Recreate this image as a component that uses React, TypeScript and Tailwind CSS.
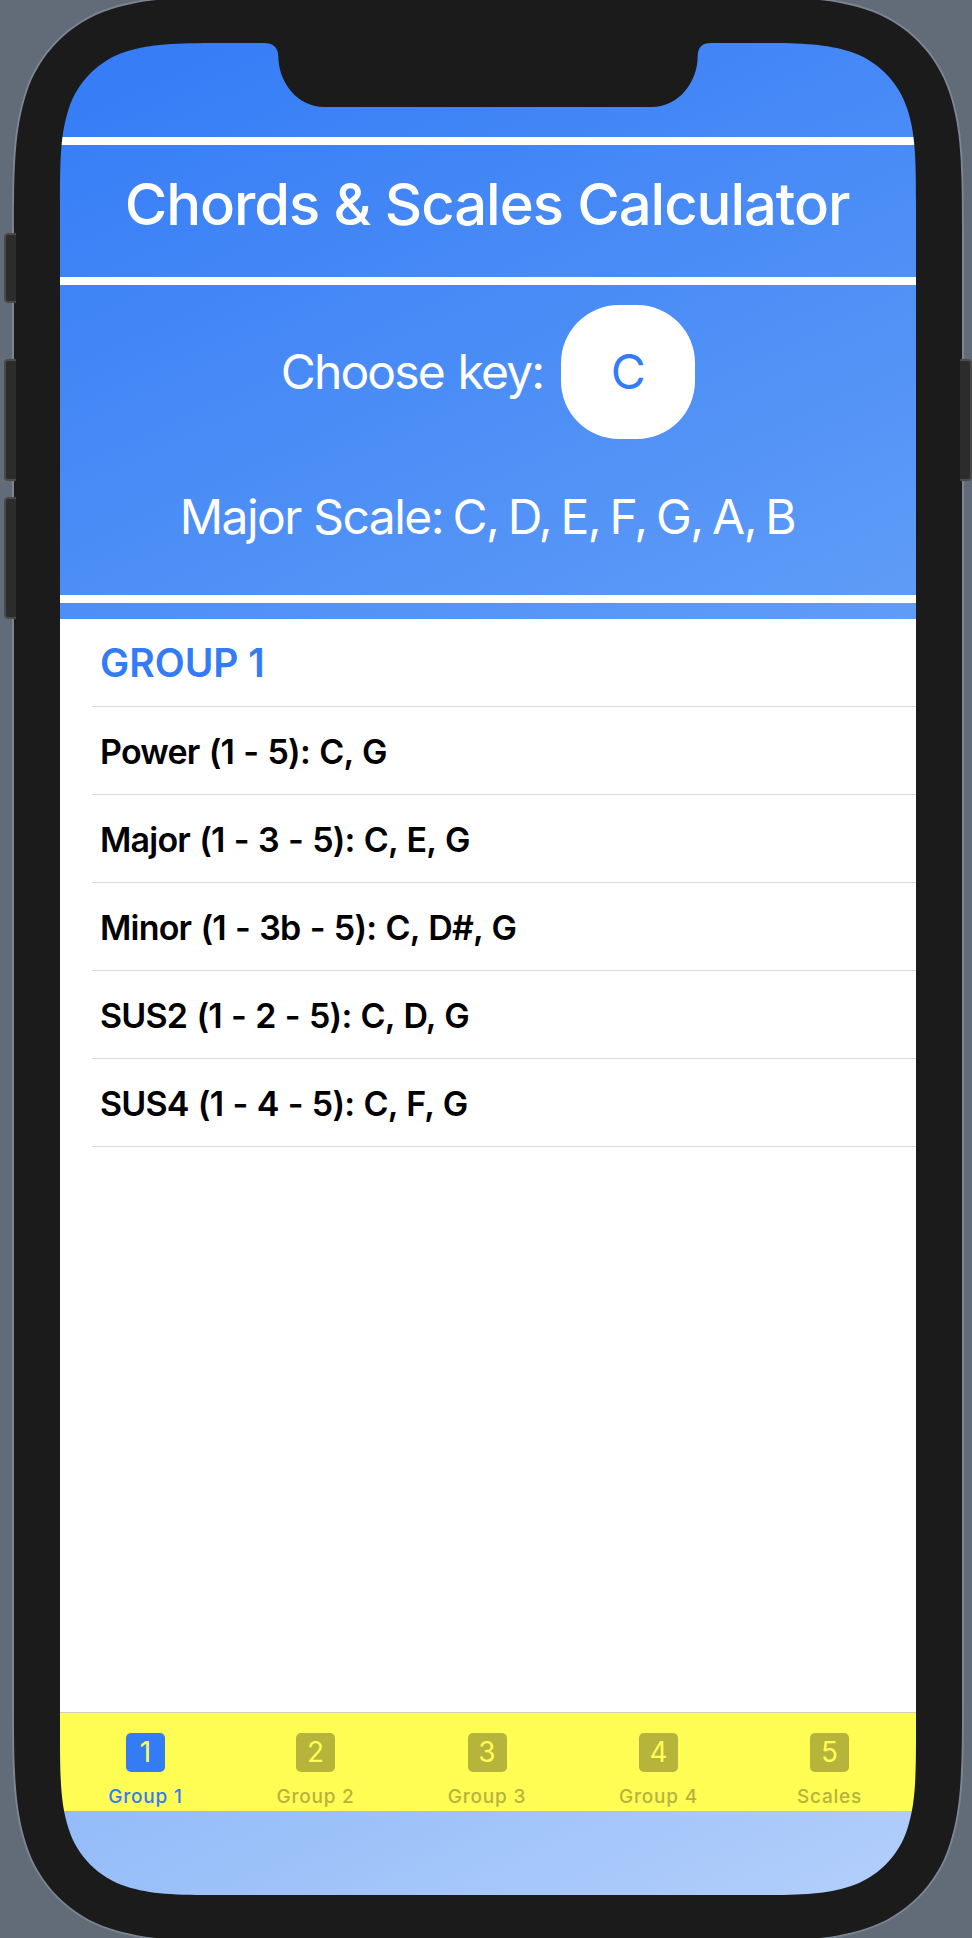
const tabs = [
  { digit: "1", label: "Group 1", width: "w-[170px] pl-px" },
  { digit: "2", label: "Group 2", width: "w-[171px]" },
  { digit: "3", label: "Group 3", width: "w-[172px]" },
  { digit: "4", label: "Group 4", width: "w-[171px]" },
  { digit: "5", label: "Scales", width: "w-[171px]" },
];

const chords = [
  "Power (1 - 5): C, G",
  "Major (1 - 3 - 5): C, E, G",
  "Minor (1 - 3b - 5): C, D#, G",
  "SUS2 (1 - 2 - 5): C, D, G",
  "SUS4 (1 - 4 - 5): C, F, G",
];

// Closed outline of a rectangle with continuous-curvature corners.
function smoothRect(l: number, t: number, r: number, b: number, rad: number) {
  const e = 1.5287 * rad;
  const p = 1.0885 * rad;
  const q = 0.86 * rad;
  const k = 0.008 * rad;
  const m = 0.6315 * rad;
  const n = 0.082 * rad;
  const u = 0.3728 * rad;
  const v = 0.162 * rad;
  return [
    `M${l + e} ${t}L${r - e} ${t}`,
    `C${r - p} ${t} ${r - q} ${t + k} ${r - m} ${t + n}`,
    `C${r - u} ${t + v} ${r - v} ${t + u} ${r - n} ${t + m}`,
    `C${r - k} ${t + q} ${r} ${t + p} ${r} ${t + e}`,
    `L${r} ${b - e}`,
    `C${r} ${b - p} ${r - k} ${b - q} ${r - n} ${b - m}`,
    `C${r - v} ${b - u} ${r - u} ${b - v} ${r - m} ${b - n}`,
    `C${r - q} ${b - k} ${r - p} ${b} ${r - e} ${b}`,
    `L${l + e} ${b}`,
    `C${l + p} ${b} ${l + q} ${b - k} ${l + m} ${b - n}`,
    `C${l + u} ${b - v} ${l + v} ${b - u} ${l + n} ${b - m}`,
    `C${l + k} ${b - q} ${l} ${b - p} ${l} ${b - e}`,
    `L${l} ${t + e}`,
    `C${l} ${t + p} ${l + k} ${t + q} ${l + n} ${t + m}`,
    `C${l + v} ${t + u} ${l + u} ${t + v} ${l + m} ${t + n}`,
    `C${l + q} ${t + k} ${l + p} ${t} ${l + e} ${t}Z`,
  ].join("");
}

function PhoneFrame() {
  const screen = smoothRect(60, 43, 916, 1895, 105);
  const body = smoothRect(14, -3, 962, 1941, 153);
  const rim = smoothRect(12, -5, 964, 1943, 155);
  const outside = "M0 0H972V1938H0Z";
  return (
    <svg className="pointer-events-none absolute inset-0" width="972" height="1938" viewBox="0 0 972 1938" aria-hidden="true">
      <path d={outside + rim} fill="#626c78" fillRule="evenodd" />
      <path d={rim + body} fill="#7d8492" fillRule="evenodd" />
      <path d={body + screen} fill="#1b1b1b" fillRule="evenodd" />
      <path
        d="M264 42V43C273 43 278 47 278.3 56C278.3 82 297 107 325 107H651C679 107 697.7 82 697.7 56C698 47 702 43 711 43V42Z"
        fill="#1b1b1b"
      />
      <g fill="#2c2c2c" stroke="#4a4a4a" strokeWidth="2">
        <path d="M16 234H8Q5 234 5 237V299Q5 302 8 302H16" />
        <path d="M16 360H8Q5 360 5 363V477Q5 480 8 480H16" />
        <path d="M16 498H8Q5 498 5 501V615Q5 618 8 618H16" />
        <path d="M960 360H968Q971 360 971 363V477Q971 480 968 480H960" />
      </g>
    </svg>
  );
}

export default function App() {
  return (
    <div className="relative h-[1938px] w-[972px] overflow-hidden bg-[#626c78] pt-[43px] pl-[60px] font-['Inter',sans-serif]">
      <main className="flex h-[1852px] w-[856px] flex-col bg-[linear-gradient(155.2deg,#347bf6,#5d9bf7_41%,#98bff9_82.4%,#b3cffb)] pt-[94px] text-white">
        <header className="flex h-[148px] items-center justify-center border-y-8 border-white pr-0.5 pb-3.5">
          <h1 className="text-[58px] leading-none font-medium tracking-[-1.06px] whitespace-nowrap">Chords &amp; Scales Calculator</h1>
        </header>
        <section className="flex h-[318px] flex-col items-center border-b-8 border-white pt-5">
          <div className="flex items-center gap-[18px] text-[48px]">
            <span className="leading-none tracking-[-1.85px] whitespace-nowrap [word-spacing:2px]">Choose key:</span>
            <button className="flex size-[134px] items-center justify-center rounded-[58px] bg-white leading-none text-[#347bf6]">C</button>
          </div>
          <p className="mt-[54px] pr-px text-[48px] leading-none tracking-[-1.55px] whitespace-nowrap">
            <span className="[word-spacing:0.5px]">Major Scale:</span>
            <span className="[word-spacing:-2.5px]"> C, D, E, F, G, A, B</span>
          </p>
        </section>
        <section className="mt-4 h-[1093px] bg-white pl-8 text-black">
          <h2 className="flex h-[88px] items-center border-b border-[#d9d9db] pl-2 text-[39px] leading-none font-semibold text-[#347bf6]">GROUP 1</h2>
          <ul>
            {chords.map((chord) => (
              <li key={chord} className="flex h-[88px] items-center border-b border-[#d9d9db] pt-0.5 pl-2 text-[34px] leading-none font-semibold tracking-[-0.8px] whitespace-nowrap [word-spacing:1.4px]">
                {chord}
              </li>
            ))}
          </ul>
        </section>
        <nav className="flex h-[99px] border-t border-[#d0d0bc] bg-[#fffd54]">
          {tabs.map((tab, i) => (
            <button key={tab.label} className={`flex flex-col items-center pt-5 ${tab.width} ${i === 0 ? "text-[#347bf6]" : "text-[#b6b43b]"}`}>
              <span className={`flex size-[39px] items-center justify-center rounded-[5px] pb-px text-[28px] leading-none ${i === 0 ? "bg-[#347bf6]" : "bg-[#b6b43b]"}`}>
                <span className="text-[#fffd54]">{tab.digit}</span>
              </span>
              <span className="mt-[14px] text-[19px] leading-[22px] font-medium tracking-[0.8px]">{tab.label}</span>
            </button>
          ))}
        </nav>
      </main>
      <PhoneFrame />
    </div>
  );
}
